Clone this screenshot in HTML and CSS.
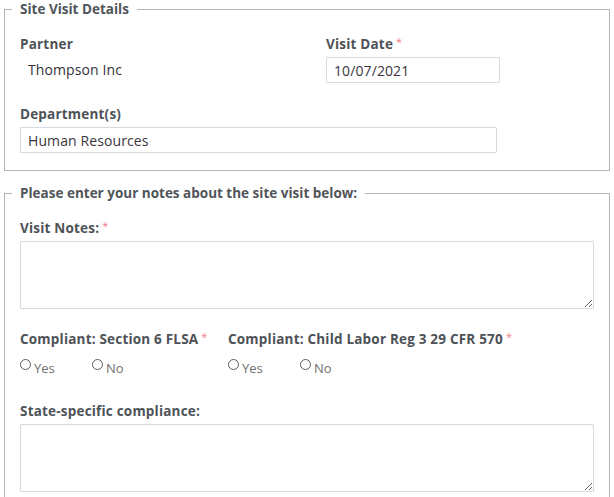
FILE: index.html
```html
<!DOCTYPE html>
<html>
<head>
<meta charset="utf-8">
<link rel="stylesheet" href="styles.css">
</head>
<body>
<form class="page">
  <fieldset class="fs fs-details">
    <legend class="fs-legend">Site Visit Details</legend>
    <div class="grid-row">
      <div class="field">
        <label class="field-label">Partner</label>
        <div class="static-value">Thompson Inc</div>
      </div>
      <div class="field">
        <label class="field-label">Visit Date<span class="req">*</span></label>
        <input class="text-input date-input" type="text" value="10/07/2021">
      </div>
    </div>
    <div class="field field-spaced">
      <label class="field-label">Department(s)</label>
      <input class="text-input dept-input" type="text" value="Human Resources">
    </div>
  </fieldset>

  <fieldset class="fs fs-notes">
    <legend class="fs-legend">Please enter your notes about the site visit below:</legend>
    <div class="field">
      <label class="field-label">Visit Notes:<span class="req">*</span></label>
      <textarea class="text-area"></textarea>
    </div>
    <div class="compliance-row">
      <div class="field compliance-a">
        <label class="field-label">Compliant: Section 6 FLSA<span class="req">*</span></label>
        <div class="radio-row">
          <label class="radio-opt"><span class="radio"></span><span class="radio-text">Yes</span></label>
          <label class="radio-opt"><span class="radio"></span><span class="radio-text">No</span></label>
        </div>
      </div>
      <div class="field compliance-b">
        <label class="field-label">Compliant: Child Labor Reg 3 29 CFR 570<span class="req">*</span></label>
        <div class="radio-row">
          <label class="radio-opt"><span class="radio"></span><span class="radio-text">Yes</span></label>
          <label class="radio-opt"><span class="radio"></span><span class="radio-text">No</span></label>
        </div>
      </div>
    </div>
    <div class="field field-state">
      <label class="field-label">State-specific compliance:</label>
      <textarea class="text-area"></textarea>
    </div>
  </fieldset>
</form>
</body>
</html>
```
FILE: styles.css
```css
html, body {
  margin: 0;
  padding: 0;
  background: #ffffff;
}
body {
  padding: 0 4px;
  font-family: "Open Sans", "DejaVu Sans", sans-serif;
  color: #4d5257;
}
.page {
  margin: 0;
}
.fs {
  margin: 0;
  border: 1px solid #b4b4b4;
  padding: 16px 15px 17px 15px;
  min-width: 0;
}
.fs-notes {
  margin-top: 13px;
}
.fs-legend {
  font-size: 13.5px;
  font-weight: 700;
  line-height: 18px;
  padding: 0 8px;
  margin-left: -8px;
  color: #50555a;
}
.grid-row {
  display: grid;
  grid-template-columns: 306px 1fr;
}
.field-label {
  display: block;
  font-size: 13.5px;
  font-weight: 700;
  line-height: 20px;
  letter-spacing: 0.2px;
  margin-bottom: 3px;
  color: #4d5257;
}
.req {
  color: #f07f88;
  font-size: 11px;
  font-weight: 400;
  margin-left: 3px;
  vertical-align: top;
  line-height: 16px;
}
.static-value {
  height: 26px;
  line-height: 26px;
  padding-left: 8px;
  font-size: 14px;
  letter-spacing: 0.1px;
  color: #33323a;
}
.text-input {
  display: block;
  box-sizing: border-box;
  height: 26px;
  border: 1px solid #d7d9e2;
  border-radius: 1px;
  padding: 0 7px;
  margin: 0;
  font-family: "Open Sans", "DejaVu Sans", sans-serif;
  font-size: 14px;
  letter-spacing: 0.1px;
  color: #3a3540;
  background: #fff;
  outline: none;
}
.date-input {
  width: 174px;
}
.dept-input {
  width: 477px;
}
.field-spaced {
  margin-top: 21px;
}
.text-area {
  display: block;
  box-sizing: border-box;
  width: 100%;
  height: 68px;
  margin: 0;
  border: 1px solid #d7d9e2;
  border-radius: 1px;
  padding: 4px 7px;
  font-family: "Open Sans", "DejaVu Sans", sans-serif;
  font-size: 13.5px;
  background: #fff;
}
.compliance-row {
  display: flex;
  margin-top: 20px;
}
.compliance-a {
  flex: 0 0 208px;
}
.compliance-b {
  flex: 1 1 auto;
}
.radio-row {
  display: flex;
  height: 24px;
}
.radio-opt {
  display: flex;
  align-items: flex-start;
  width: 72px;
}
.radio {
  box-sizing: border-box;
  width: 11px;
  height: 11px;
  margin-top: 7px;
  border: 1px solid #5a5a5a;
  border-radius: 50%;
  flex: 0 0 auto;
}
.radio-text {
  margin-left: 3px;
  font-size: 13px;
  line-height: 24px;
  padding-top: 4px;
  color: #707070;
}
.field-state {
  margin-top: 25px;
}
```
